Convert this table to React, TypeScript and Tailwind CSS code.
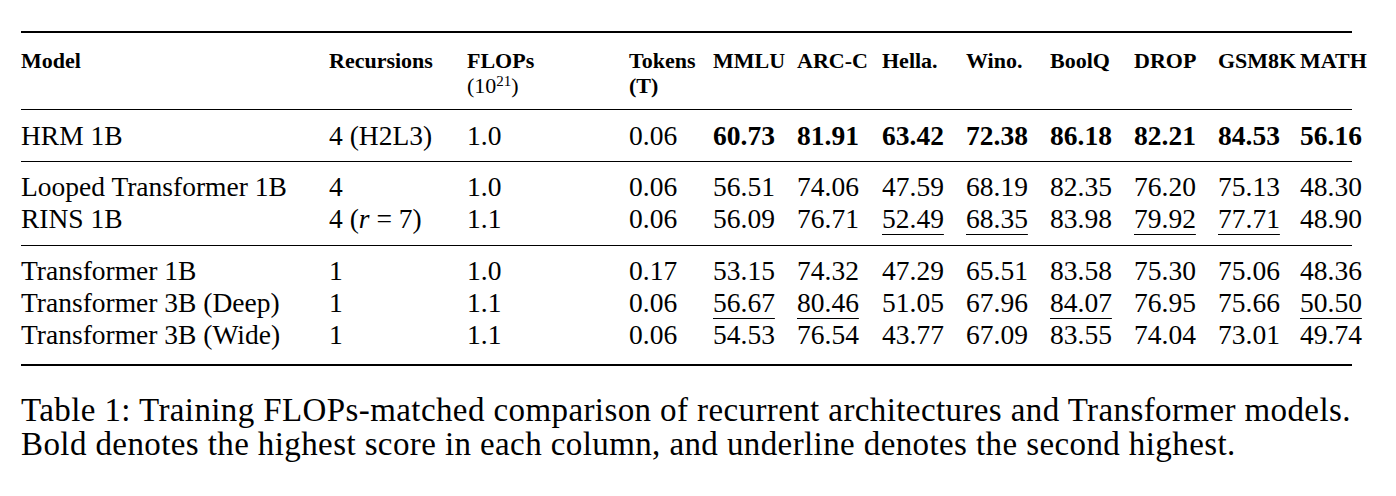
import type { ReactNode } from 'react'

// 12 columns; the last one is narrower than its text, which spills past the rules as in the PDF
const GRID =
  'grid grid-cols-[308px_138px_162px_84px_84px_85px_84px_84px_84px_84px_82px_52px] whitespace-nowrap'

const BENCH = ['MMLU', 'ARC-C', 'Hella.', 'Wino.', 'BoolQ', 'DROP', 'GSM8K', 'MATH']

type Mark = 'b' | 'u' | null
type Row = { model: string; rec: ReactNode; flops: string; tokens: string; scores: [string, Mark][] }

const n = (v: string, m: Mark = null): [string, Mark] => [v, m]

const SECTIONS: { pad: string; rows: Row[] }[] = [
  {
    pad: 'pt-[10px] pb-[9px] border-b',
    rows: [
      {
        model: 'HRM 1B', rec: '4 (H2L3)', flops: '1.0', tokens: '0.06',
        scores: ['60.73', '81.91', '63.42', '72.38', '86.18', '82.21', '84.53', '56.16'].map((v) => n(v, 'b')),
      },
    ],
  },
  {
    pad: 'pt-[9px] pb-[10px] border-b',
    rows: [
      {
        model: 'Looped Transformer 1B', rec: '4', flops: '1.0', tokens: '0.06',
        scores: [n('56.51'), n('74.06'), n('47.59'), n('68.19'), n('82.35'), n('76.20'), n('75.13'), n('48.30')],
      },
      {
        model: 'RINS 1B',
        rec: <>4 (<i>r</i>&nbsp;=&nbsp;7)</>,
        flops: '1.1', tokens: '0.06',
        scores: [n('56.09'), n('76.71'), n('52.49', 'u'), n('68.35', 'u'), n('83.98'), n('79.92', 'u'), n('77.71', 'u'), n('48.90')],
      },
    ],
  },
  {
    pad: 'pt-[9px] pb-[13px] border-b-[2px]',
    rows: [
      {
        model: 'Transformer 1B', rec: '1', flops: '1.0', tokens: '0.17',
        scores: [n('53.15'), n('74.32'), n('47.29'), n('65.51'), n('83.58'), n('75.30'), n('75.06'), n('48.36')],
      },
      {
        model: 'Transformer 3B (Deep)', rec: '1', flops: '1.1', tokens: '0.06',
        scores: [n('56.67', 'u'), n('80.46', 'u'), n('51.05'), n('67.96'), n('84.07', 'u'), n('76.95'), n('75.66'), n('50.50', 'u')],
      },
      {
        model: 'Transformer 3B (Wide)', rec: '1', flops: '1.1', tokens: '0.06',
        scores: [n('54.53'), n('76.54'), n('43.77'), n('67.09'), n('83.55'), n('74.04'), n('73.01'), n('49.74')],
      },
    ],
  },
]

function Score({ value, mark }: { value: string; mark: Mark }) {
  if (mark === 'b') return <span className="font-bold">{value}</span>
  if (mark === 'u') return <span className="underline decoration-1 underline-offset-[6px]">{value}</span>
  return <span>{value}</span>
}

export default function App() {
  return (
    <div className="min-h-[496px] bg-white pt-[31px] text-black [font-family:'Liberation_Serif','Times_New_Roman',serif]">
      <div className="ml-[21px] w-[1331px]">
        {/* header */}
        <div className={`${GRID} border-t-[2px] border-b border-black pt-[15px] pb-[11px] text-[22px] leading-[25px] font-bold`}>
          <div>Model</div>
          <div>Recursions</div>
          <div>
            FLOPs
            <br />
            <span className="font-normal">
              (10<sup className="text-[15px]">21</sup>)
            </span>
          </div>
          <div>
            Tokens
            <br />
            (T)
          </div>
          {BENCH.map((b) => (
            <div key={b}>{b}</div>
          ))}
        </div>

        {SECTIONS.map((s, i) => (
          <div key={i} className={`${s.pad} border-black text-[27.5px] leading-[32px]`}>
            {s.rows.map((r) => (
              <div key={r.model} className={GRID}>
                <div>{r.model}</div>
                <div>{r.rec}</div>
                <div>{r.flops}</div>
                <div>{r.tokens}</div>
                {r.scores.map(([v, m], j) => (
                  <div key={j}>
                    <Score value={v} mark={m} />
                  </div>
                ))}
              </div>
            ))}
          </div>
        ))}
      </div>

      <p className="mt-[27px] ml-[21px] text-[33px] leading-[34px] tracking-[0.4px]">
        Table 1: Training FLOPs-matched comparison of recurrent architectures and Transformer models.
        <br />
        Bold denotes the highest score in each column, and underline denotes the second highest.
      </p>
    </div>
  )
}
